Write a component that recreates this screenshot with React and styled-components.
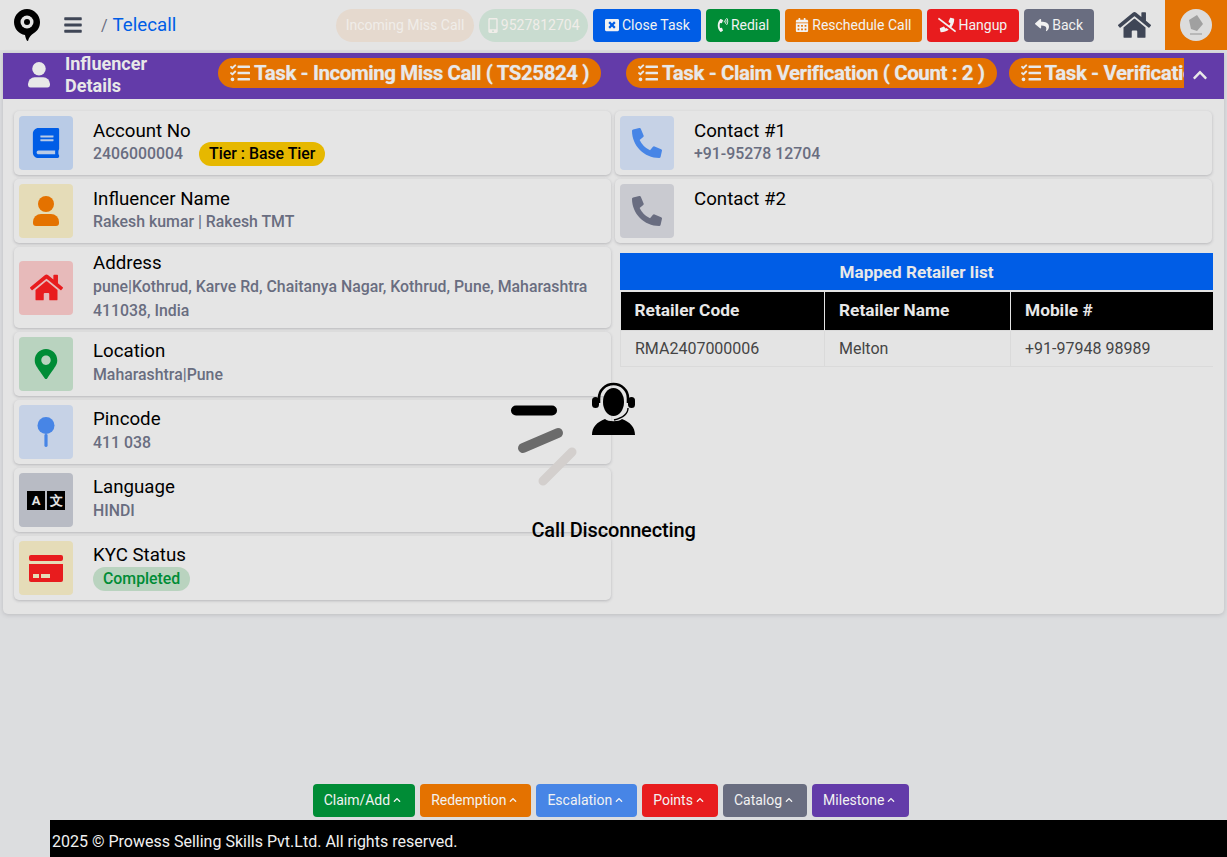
import React from 'react';
import styled, { createGlobalStyle } from 'styled-components';
import {
	FaBars, FaBook, FaCalendarAlt, FaChevronUp, FaHome, FaMapMarkerAlt, FaMobileAlt, FaPhoneAlt,
	FaPhoneSlash, FaPhoneVolume, FaReply, FaTasks, FaWindowClose
} from 'react-icons/fa';

const colors = {
	blue: '#005de6',
	sky: '#4785e6',
	green: '#008c36',
	orange: '#e47200',
	red: '#e81c1e',
	gray: '#696d80',
	purple: '#633ba9',
	yellow: '#e6b800'
};

const GlobalStyle = createGlobalStyle`
	* { box-sizing: border-box; }
	html, body { margin: 0; height: 100%; }
	body {
		background: #dcdddf;
		font-family: Roboto, "Liberation Sans", sans-serif;
		color: #000;
	}
`;

const Page = styled.div`
	position: relative;
	height: 857px;
	overflow: hidden;
	display: flex;
	flex-direction: column;
`;

const TopBar = styled.header`
	height: 50px;
	background: #e4e4e4;
	display: flex;
	align-items: center;
	padding-left: 14px;
`;

const Crumb = styled.div`
	margin-left: 19px;
	font-size: 18.7px;
	color: ${colors.blue};

	span {
		color: ${colors.gray};
		font-size: 16px;
		margin-right: 5px;
	}
`;

const MenuIcon = styled(FaBars)`
	width: 18px;
	height: 20px;
	margin-left: 24px;
	color: #3f4656;
`;

const TopActions = styled.div`
	margin-left: auto;
	display: flex;
	align-items: center;
	gap: 5px;
`;

const Pill = styled.div`
	height: 33px;
	border-radius: 17px;
	padding: 0 ${props => props.$pad}px;
	display: flex;
	align-items: center;
	gap: 3px;
	font-size: 14px;
	color: #f0ede9;
	background: ${props => props.$bg};

	svg {
		width: 10px;
		height: 15px;
	}
`;

const Button = styled.button`
	height: 33px;
	border: 0;
	border-radius: 4px;
	padding: 0 ${props => props.$right || props.$pad || 10}px 0 ${props => props.$pad || 10}px;
	display: flex;
	align-items: center;
	gap: ${props => props.$gap || 3}px;
	font-family: inherit;
	font-size: 14px;
	color: #f2f2f2;
	background: ${props => colors[props.$color]};

	svg {
		width: ${props => props.$icon || 14}px;
		height: ${props => props.$icon || 14}px;
	}
`;

const HomeLink = styled(FaHome)`
	width: 33px;
	height: 30px;
	margin: 0 14px 0 24px;
	color: #3f4656;
`;

const AvatarBox = styled.div`
	width: 62px;
	height: 50px;
	background: ${colors.orange};
	display: flex;
	align-items: center;
	justify-content: center;
`;

const Avatar = styled.div`
	width: 32px;
	height: 32px;
	border-radius: 50%;
	background: #dcdcdc;
	display: flex;
	align-items: center;
	justify-content: center;
`;

const Panel = styled.main`
	margin: 3px 3px 0;
	height: 561px;
	background: #e4e4e4;
	border-radius: 0 0 5px 5px;
	box-shadow: 0 1px 4px rgba(90, 90, 100, .25);
`;

const PurpleBar = styled.div`
	height: 46px;
	background: ${colors.purple};
	display: flex;
	align-items: center;
`;

const BarTitle = styled.div`
	width: 215px;
	flex: none;
	display: flex;
	align-items: center;
	padding: 0 0 2px 25px;
	font-size: 18px;
	font-weight: 700;
	line-height: 22px;
	color: #e8e8e8;

	svg {
		margin-right: 15px;
	}

	span {
		width: 90px;
	}
`;

const TaskStrip = styled.div`
	flex: 1;
	min-width: 0;
	margin-bottom: 6px;
	display: flex;
	gap: 25px;
	overflow: hidden;
`;

const TaskPill = styled.div`
	flex: none;
	height: 30px;
	margin-right: ${props => props.$tight ? -13 : 0}px;
	border-radius: 15px;
	padding: 0 12px;
	display: flex;
	align-items: center;
	gap: 4px;
	background: ${colors.orange};
	color: #e8e8e8;
	font-size: 20.4px;
	font-weight: 700;
	letter-spacing: -.38px;
	white-space: nowrap;
	text-shadow: 0 0 1px rgba(232, 232, 232, .6);

	svg {
		width: 20px;
		height: 20px;
	}
`;

const Collapse = styled.div`
	width: 40px;
	flex: none;
	display: flex;
	justify-content: center;
	padding: 0 9px 2px 0;
	color: #e8e8e8;

	svg {
		width: 16px;
		height: 16px;
	}
`;

const Columns = styled.div`
	display: grid;
	grid-template-columns: 597px 597px;
	column-gap: 4px;
	padding: 12px 0 0 11px;
`;

const Stack = styled.div`
	display: flex;
	flex-direction: column;
	gap: 4px;
`;

const Card = styled.div`
	min-height: 64px;
	border-radius: 5px;
	background: #e5e5e5;
	box-shadow: 0 1px 3px rgba(90, 90, 100, .32);
	padding: 5px;
	display: flex;
	align-items: center;
`;

const Tile = styled.div`
	width: 54px;
	height: 54px;
	flex: none;
	border-radius: 4px;
	background: ${props => props.$bg};
	color: ${props => props.$fg};
	display: flex;
	align-items: center;
	justify-content: center;
`;

const CardBody = styled.div`
	margin-left: 20px;
	align-self: flex-start;
`;

const CardTitle = styled.div`
	font-size: 18.7px;
	line-height: 24px;
	margin-top: ${props => props.$top}px;
`;

const CardValue = styled.div`
	font-size: 15.85px;
	font-weight: 500;
	line-height: 24px;
	color: #696d80;
	display: flex;
	align-items: center;
`;

const RaisedValue = styled(CardValue)`
	margin-top: -1px;
`;

const ValueLines = styled(CardValue)`
	display: block;
`;

const TierBadge = styled.span`
	margin-left: 16px;
	height: 24px;
	border-radius: 12px;
	padding: 0 10px;
	background: ${colors.yellow};
	color: #000;
	line-height: 24px;
`;

const DoneBadge = styled.span`
	height: 24px;
	border-radius: 12px;
	padding: 0 10px;
	background: #b9d3bf;
	color: ${colors.green};
	line-height: 24px;
`;

const LangGlyph = styled.span`
	width: 18px;
	height: 19px;
	background: #000;
	color: #e4e4e4;
	font-size: 13px;
	font-weight: 700;
	line-height: 19px;
	text-align: center;
	margin: 0 1px;
`;

const RetailerTable = styled.table`
	width: 593px;
	margin: 6px 0 0 5px;
	border-collapse: collapse;
	font-size: 16px;
	color: #444;

	caption {
		height: 38px;
		line-height: 38px;
		background: ${colors.blue};
		color: #e8e8e8;
		font-size: 17.1px;
		font-weight: 700;
		border-bottom: 1px solid #e4e4e4;
	}

	th {
		height: 39px;
		padding: 0 14px 2px;
		background: #000;
		color: #e8e8e8;
		font-size: 17.3px;
		text-align: left;
		border-left: 1px solid #e4e4e4;
		border-top: 1px solid #e4e4e4;
	}

	th:first-child { border-left: 0; width: 204px; }
	th:nth-child(2) { width: 186px; }

	td {
		height: 36px;
		padding: 0 14px;
		border: 1px solid #dadada;
		border-right: 0;
	}
`;

const BottomBar = styled.nav`
	margin-top: auto;
	display: flex;
	justify-content: center;
	gap: 5px;
	padding-right: 5px;
	margin-bottom: 3px;

	button {
		padding-bottom: 2px;
	}
`;

const Footer = styled.footer`
	margin-left: 50px;
	height: 37px;
	background: #000;
	color: #f0f0f0;
	font-size: 16px;
	line-height: 43px;
	padding-left: 2px;
`;

const Overlay = styled.div`
	position: absolute;
	inset: 0;
	display: flex;
	flex-direction: column;
	align-items: center;
	padding-top: 378px;
	pointer-events: none;
`;

const OverlayText = styled.div`
	margin-top: 30px;
	font-size: 20px;
	font-weight: 500;
	letter-spacing: -.15px;
`;

const Logo = () => (
	<svg width="26" height="32" viewBox="0 0 26 32">
		<path d="M13 0C20 0 26 6 26 13c0 6-3 9-6 11-3 2-5 4-6 8-1 0-2-1-3-6C5 25 0 20 0 13 0 6 6 0 13 0z" fill="#000"/>
		<circle cx="13" cy="13" r="6.5" fill="#e4e4e4"/>
		<circle cx="13" cy="13" r="3" fill="#000"/>
	</svg>
);

const Person = ({size, color}) => (
	<svg width={size} height={size * 30 / 26} viewBox="0 0 26 30" fill={color}>
		<circle cx="13" cy="8" r="8"/>
		<path d="M8 18h10a8 8 0 0 1 8 8v1a3 3 0 0 1-3 3H3a3 3 0 0 1-3-3v-1a8 8 0 0 1 8-8z"/>
	</svg>
);

const Pin = () => (
	<svg width="18" height="30" viewBox="0 0 18 30">
		<circle cx="9" cy="8.5" r="8.5" fill={colors.sky}/>
		<rect x="7.4" y="17" width="3.2" height="13" rx="1.4" fill={colors.sky}/>
	</svg>
);

const PayCard = () => (
	<svg width="34" height="27" viewBox="0 0 34 27">
		<rect width="34" height="6" rx="2" fill={colors.red}/>
		<path d="M0 9h34v16a2 2 0 0 1-2 2H2a2 2 0 0 1-2-2z" fill={colors.red}/>
		<rect x="4" y="19" width="6" height="4" fill="#e5dcb8"/>
		<rect x="12" y="19" width="9" height="4" fill="#e5dcb8"/>
	</svg>
);

// viewBox uses page coordinates, the box is centred on the page
const Spinner = () => (
	<svg width="217" height="110" viewBox="505 378 217 110">
		<path d="M516 410.5h36" stroke="#000" strokeWidth="10" strokeLinecap="round"/>
		<path d="M523 448l35-15" stroke="#6b6b6b" strokeWidth="10" strokeLinecap="round"/>
		<path d="M543 481l29-29" stroke="#d3cfcd" strokeWidth="9" strokeLinecap="round"/>
		<ellipse cx="613.5" cy="402" rx="10.5" ry="14" fill="#000"/>
		<path d="M599 403v-5a14.5 14 0 0 1 29 0v5" fill="none" stroke="#000" strokeWidth="2.6"/>
		<rect x="592" y="397" width="7" height="11" rx="3.5" fill="#000"/>
		<rect x="628" y="397" width="7" height="11" rx="3.5" fill="#000"/>
		<path d="M628 408c0 6-6 10-14 12" fill="none" stroke="#000" strokeWidth="1.4"/>
		<path d="M592 435c0-8 5-13 13-16 3 3 14 3 17 0 8 3 13 8 13 16z" fill="#000"/>
	</svg>
);

const Info = ({bg, fg, icon, title, top = 2, children}) => (
	<Card>
		<Tile $bg={bg} $fg={fg}>{icon}</Tile>
		<CardBody>
			<CardTitle $top={top}>{title}</CardTitle>
			{children}
		</CardBody>
	</Card>
);

const MenuButton = ({color, children}) => (
	<Button $color={color} $pad={11} $right={14} $icon={8}>{children}<FaChevronUp/></Button>
);

const App = () => {
	return (
		<Page>
			<GlobalStyle/>
			<TopBar>
				<Logo/>
				<MenuIcon/>
				<Crumb><span>/</span>Telecall</Crumb>
				<TopActions>
					<Pill $bg="#e5d9ce" $pad={10}>Incoming Miss Call</Pill>
					<Pill $bg="#c9dcd0" $pad={8.5}><FaMobileAlt/>9527812704</Pill>
					<Button $color="blue" $pad={12} $right={11}><FaWindowClose/>Close Task</Button>
					<Button $color="green" $gap={1} $right={11}><FaPhoneVolume/>Redial</Button>
					<Button $color="orange" $right={11}><FaCalendarAlt/>Reschedule Call</Button>
					<Button $color="red" $pad={11} $right={12} $gap={2} $icon={18}><FaPhoneSlash/>Hangup</Button>
					<Button $color="gray" $pad={11}><FaReply/>Back</Button>
				</TopActions>
				<HomeLink/>
				<AvatarBox>
					<Avatar>
						<svg width="18" height="22" viewBox="0 0 18 22">
							<path d="M2 6l8-5 6 9-6 7-6-2z" fill="#a0a0a0"/>
							<path d="M3 20h12" stroke="#a8a8a8" strokeWidth="1.4"/>
						</svg>
					</Avatar>
				</AvatarBox>
			</TopBar>
			<Panel>
				<PurpleBar>
					<BarTitle><Person size={22} color="#e8e8e8"/><span>Influencer Details</span></BarTitle>
					<TaskStrip>
						<TaskPill><FaTasks/>Task - Incoming Miss Call ( TS25824 )</TaskPill>
						<TaskPill $tight><FaTasks/>Task - Claim Verification ( Count : 2 )</TaskPill>
						<TaskPill><FaTasks/>Task - Verification</TaskPill>
					</TaskStrip>
					<Collapse><FaChevronUp/></Collapse>
				</PurpleBar>
				<Columns>
					<Stack>
						<Info bg="#b9cbe6" fg={colors.blue} icon={<FaBook size={30}/>} title="Account No" top={3}>
							<RaisedValue>2406000004<TierBadge>Tier : Base Tier</TierBadge></RaisedValue>
						</Info>
						<Info bg="#e5dcb8" fg={colors.orange} icon={<Person size={26} color={colors.orange}/>} title="Influencer Name" top={3}>
							<RaisedValue>Rakesh kumar | Rakesh TMT</RaisedValue>
						</Info>
						<Info bg="#e7baba" fg={colors.red} icon={<FaHome size={33}/>} title="Address" top={-1}>
							<ValueLines>pune|Kothrud, Karve Rd, Chaitanya Nagar, Kothrud, Pune, Maharashtra<br/>411038, India</ValueLines>
						</Info>
						<Info bg="#b9d3bf" fg={colors.green} icon={<FaMapMarkerAlt size={30}/>} title="Location">
							<CardValue>Maharashtra|Pune</CardValue>
						</Info>
						<Info bg="#c6d2e6" fg={colors.sky} icon={<Pin/>} title="Pincode">
							<CardValue>411 038</CardValue>
						</Info>
						<Info bg="#b8bbc4" fg="#000" icon={<><LangGlyph>A</LangGlyph><LangGlyph>文</LangGlyph></>} title="Language">
							<CardValue>HINDI</CardValue>
						</Info>
						<Info bg="#e5dcb8" fg={colors.red} icon={<PayCard/>} title="KYC Status">
							<CardValue><DoneBadge>Completed</DoneBadge></CardValue>
						</Info>
					</Stack>
					<Stack>
						<Info bg="#c6d2e6" fg={colors.sky} icon={<FaPhoneAlt size={30}/>} title="Contact #1" top={3}>
							<RaisedValue>+91-95278 12704</RaisedValue>
						</Info>
						<Info bg="#c9cad0" fg={colors.gray} icon={<FaPhoneAlt size={30}/>} title="Contact #2" top={3}/>
						<RetailerTable>
							<caption>Mapped Retailer list</caption>
							<thead>
								<tr><th>Retailer Code</th><th>Retailer Name</th><th>Mobile #</th></tr>
							</thead>
							<tbody>
								<tr><td>RMA2407000006</td><td>Melton</td><td>+91-97948 98989</td></tr>
							</tbody>
						</RetailerTable>
					</Stack>
				</Columns>
			</Panel>
			<BottomBar>
				<MenuButton color="green">Claim/Add</MenuButton>
				<MenuButton color="orange">Redemption</MenuButton>
				<MenuButton color="sky">Escalation</MenuButton>
				<MenuButton color="red">Points</MenuButton>
				<MenuButton color="gray">Catalog</MenuButton>
				<MenuButton color="purple">Milestone</MenuButton>
			</BottomBar>
			<Footer>2025 © Prowess Selling Skills Pvt.Ltd. All rights reserved.</Footer>
			<Overlay>
				<Spinner/>
				<OverlayText>Call Disconnecting</OverlayText>
			</Overlay>
		</Page>
	);
};

export default App;
